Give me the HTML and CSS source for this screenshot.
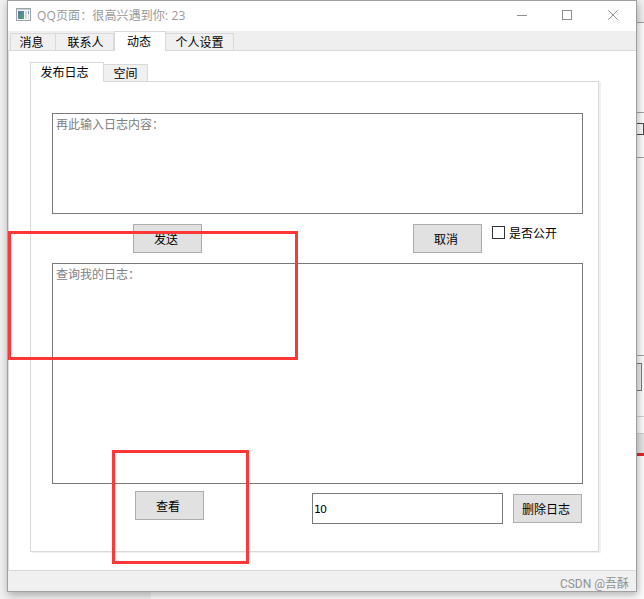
FILE: index.html
```
<!DOCTYPE html>
<html lang="zh-CN">
<head>
<meta charset="utf-8">
<title>QQ页面</title>
<link rel="stylesheet" href="styles.css">
</head>
<body>
<div class="desktop">
  <svg class="backdrop" width="644" height="599" shape-rendering="crispEdges">
    <rect width="644" height="599" fill="#f0f0f0"/>
    <rect x="151" y="591" width="493" height="8" fill="#fdfdfd"/>
    <rect x="636" y="22" width="8" height="569" fill="#fdfdfd"/>
    <rect x="636" y="434" width="8" height="19" fill="#e4e4e4"/>
    <path d="M636 22.5h8M636 112.5h8M636 157.5h8M636 355.5h8" stroke="#a3a3a3"/>
    <path d="M636 416.5h8M636 433.5h8" stroke="#d0d0d0"/>
    <path d="M630 123.5h13.5v11H630" fill="none" stroke="#4a4a4a"/>
    <path d="M630 363.5h11.5v27H630" fill="#eee" stroke="#777"/>
    <rect x="636" y="453" width="8" height="3" fill="#d92d2d"/>
  </svg>
  <main class="window">
    <header class="titlebar">
      <svg class="app-icon" width="16" height="14" viewBox="0 0 16 14">
        <defs><linearGradient id="picture" x2="1" y2="1"><stop stop-color="#5277a8"/><stop offset="1" stop-color="#55a373"/></linearGradient></defs>
        <rect x=".5" y=".5" width="14" height="12" fill="#f5f6f7" stroke="#9ba5ac"/>
        <path d="M1 1.5h13" stroke="#c5cdd2"/>
        <rect x="2" y="3" width="6" height="8" fill="url(#picture)"/>
        <rect x="9" y="3" width="2" height="8" fill="#d5dadd"/>
        <rect x="12" y="3" width="1" height="3" fill="#6d9fc4"/>
        <rect x="12" y="6" width="1" height="5" fill="#dfe5e6"/>
      </svg>
      <span class="title">QQ页面：很高兴遇到你: 23</span>
      <svg class="controls" width="104" height="12" fill="none" stroke="#8f8f8f">
        <path d="M0 6.500h10M45.500 1.500h9v9h-9z" shape-rendering="crispEdges"/>
        <path d="M91.200 1.200l9.600 9.600M100.800 1.200l-9.600 9.600"/>
      </svg>
    </header>
    <nav class="tabs">
      <span class="tab tab-message">消息</span>
      <span class="tab tab-contact">联系人</span>
      <span class="tab tab-news active">动态</span>
      <span class="tab tab-settings">个人设置</span>
    </nav>
    <section class="page">
      <nav class="subtabs">
        <span class="tab tab-log active">发布日志</span>
        <span class="tab tab-space">空间</span>
      </nav>
      <div class="pane">
        <div class="box compose">再此输入日志内容：</div>
        <div class="row actions">
          <span class="button">发送</span>
          <span class="button cancel">取消</span>
          <span class="check"><i class="checkbox"></i>是否公开</span>
        </div>
        <div class="box history">查询我的日志：</div>
        <div class="row lookup">
          <span class="button view">查看</span>
          <span class="entry">10</span>
          <span class="button delete">删除日志</span>
        </div>
      </div>
    </section>
    <footer class="statusbar"><span>CSDN @吾酥</span></footer>
  </main>
  <div class="mark mark-history"></div>
  <div class="mark mark-view"></div>
</div>
</body>
</html>
```
FILE: styles.css
```
* { box-sizing: border-box; }
body {
  margin: 0;
  font: 12px/16px "Noto Sans CJK SC", sans-serif;
  color: #000;
}
.desktop {
  position: relative;
  width: 644px;
  height: 599px;
  padding-left: 7px;
  overflow: hidden;
}
.backdrop { position: absolute; left: 0; top: 0; }
.window {
  position: relative;
  display: flex;
  flex-direction: column;
  width: 630px;
  height: 592px;
  border: 1px solid #a0a0a0;
  background: #fff;
  box-shadow: 1px 3px 8px rgba(0, 0, 0, .3);
}
.titlebar {
  display: flex;
  align-items: center;
  height: 30px;
  padding: 0 15px 0 8px;
}
.app-icon { margin-top: -2px; }
.title {
  margin-left: 5px;
  font-family: "Open Sans", "Noto Sans CJK SC", sans-serif;
  letter-spacing: .12px;
  white-space: nowrap;
  color: #999;
}
.controls { margin: -2px 0 0 auto; }
.tabs {
  display: flex;
  align-items: flex-end;
  height: 20px;
  padding-left: 2px;
  background: #efefef;
  box-shadow: inset 0 -1px #d9d9d9;
}
.tab {
  height: 18px;
  border: 1px solid #d9d9d9;
  border-left: 0;
  background: #f0f0f0;
  line-height: 15px;
  text-align: center;
  white-space: nowrap;
}
.tab.active {
  height: 20px;
  border-bottom: 0;
  background: #fff;
}
.tab-message { width: 46px; border-left: 1px solid #d9d9d9; padding-right: 3px; }
.tab-contact { width: 58px; padding-left: 2px; }
.tab-news { width: 52px; border-left: 1px solid #d9d9d9; padding-right: 2px; line-height: 18px; }
.tab-settings { width: 68px; }
.page {
  height: 520px;
  padding: 11px 35px 0 21px;
  border-left: 1px solid #dcdcdc;
  border-bottom: 1px solid #d9d9d9;
}
.subtabs {
  position: relative;
  display: flex;
  align-items: flex-end;
  height: 20px;
  margin-bottom: -1px;
}
.tab-log { width: 74px; border-left: 1px solid #d9d9d9; padding-right: 5px; line-height: 17px; }
.tab-space { width: 44px; }
.pane {
  width: 569px;
  height: 471px;
  padding: 31px 0 0 21px;
  border: 1px solid #d9d9d9;
  box-shadow: 2px 1px #f0f0f0;
}
.box {
  width: 531px;
  padding: 2px 3px;
  border: 1px solid #7a7a7a;
  color: #808080;
}
.compose { height: 101px; }
.history { height: 221px; }
.row { display: flex; align-items: flex-start; }
.actions { height: 49px; padding: 10px 0 0 81px; }
.button {
  width: 69px;
  height: 29px;
  border: 1px solid #adadad;
  background: #e1e1e1;
  line-height: 27px;
  padding-right: 3px;
  text-align: center;
}
.cancel { margin-left: 211px; }
.check {
  display: flex;
  align-items: center;
  gap: 4px;
  height: 17px;
  margin-left: 10px;
}
.checkbox {
  width: 13px;
  height: 13px;
  border: 1px solid #333;
}
.lookup { padding: 7px 0 0 83px; }
.entry {
  width: 191px;
  height: 31px;
  margin: 2px 10px 0 108px;
  padding-left: 1px;
  border: 1px solid #7a7a7a;
  font: 11px/31px "DejaVu Sans", sans-serif;
  letter-spacing: -1px;
}
.delete { margin-top: 3px; }
.statusbar {
  height: 20px;
  padding: 5px 7px 0 0;
  background: #f0f0f0;
  color: #929292;
  font-family: Roboto, "Noto Sans CJK SC", sans-serif;
  text-align: right;
}
.mark { position: absolute; border: 3px solid #ff3737; }
.mark-history { left: 8px; top: 231px; width: 290px; height: 129px; }
.mark-view { left: 112px; top: 450px; width: 137px; height: 114px; }
```
